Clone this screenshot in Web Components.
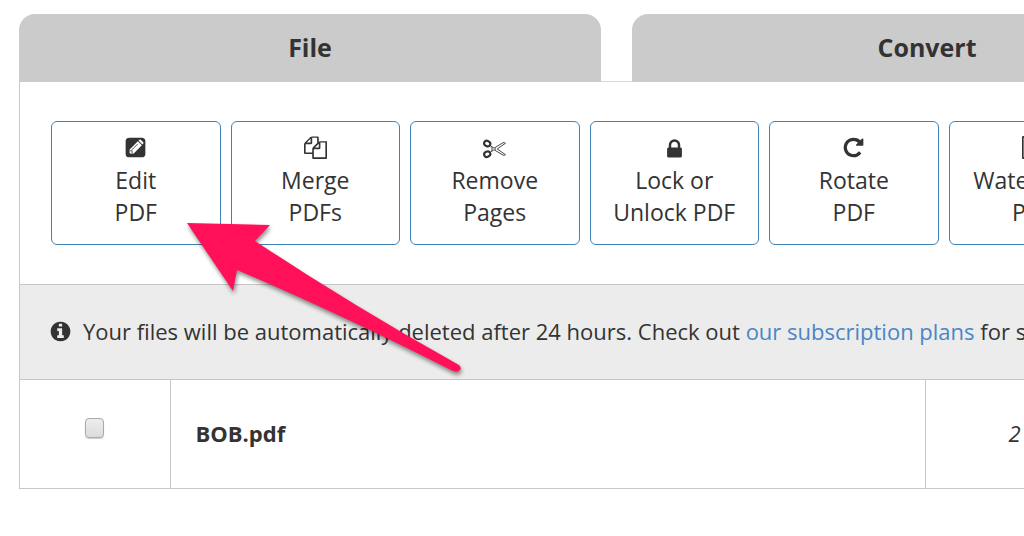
<!DOCTYPE html>
<html lang="en">
<head>
<meta charset="utf-8">
<title>PDF tools</title>
<style>
html, body { margin: 0; background: #fff; overflow: hidden; }
body { font-family: "Open Sans", "Noto Sans", sans-serif; font-size: 22px; line-height: 32px; color: #333; }
</style>
</head>
<body>
<pdf-app></pdf-app>
<script>
const define = (name, html, setup) => {
  const template = document.createElement('template');
  template.innerHTML = html;
  customElements.define(name, class extends HTMLElement {
    constructor() {
      super();
      this.attachShadow({ mode: 'open' }).append(template.content.cloneNode(true));
    }
    connectedCallback() { if (setup) setup(this); }
  });
};

const icons = {
  edit: '<rect x="128" y="128" width="1536" height="1536" rx="290"/><path fill="#fff" d="M440 1370V1050L1080 410L1390 720L760 1370ZM1130 360l70-70q50-40 100 0l200 200q50 50 0 100l-65 75z"/><path fill="none" stroke="#333" stroke-width="65" d="M610 1080l470-470M480 1150h150v170"/>',
  copy: '<path d="M1696 384q40 0 68 28t28 68v1216q0 40-28 68t-68 28H736q-40 0-68-28t-28-68v-288H96q-40 0-68-28t-28-68V672q0-40 20-88t48-76L476 100q28-28 76-48t88-20h416q40 0 68 28t28 68v328q68-40 128-40h416zm-544 213L853 896h299V597zM512 213L213 512h299V213zm196 647l316-316V128H640v416q0 40-28 68t-68 28H128v640h512v-256q0-40 20-88t48-76zm956 804V512h-384v416q0 40-28 68t-68 28H768v640h896z"/>',
  cut: '<g fill="none" stroke="#333"><g stroke-width="170"><ellipse cx="330" cy="590" rx="245" ry="205" transform="rotate(25 330 590)"/><ellipse cx="330" cy="1420" rx="245" ry="205" transform="rotate(-25 330 1420)"/></g><path stroke-width="70" stroke-linejoin="round" d="M540 740L860 950L1560 520Q1660 490 1750 565L1110 1010L1750 1455Q1660 1530 1560 1490L860 1070L540 1280M700 840v340"/><circle cx="960" cy="1010" r="35" stroke-width="50"/></g>',
  lock: '<path d="M640 768h512V576q0-106-75-181t-181-75-181 75-75 181v192zm832 96v576q0 40-28 68t-68 28H416q-40 0-68-28t-28-68V864q0-40 28-68t68-28h32V576q0-184 132-316t316-132 316 132 132 316v192h32q40 0 68 28t28 68z" transform="translate(0 130)"/>',
  rotate: '<path d="M1664 256v448q0 26-19 45t-45 19h-448q-42 0-59-40-17-39 14-69l138-138Q1097 384 896 384q-104 0-198.500 40.500T534 534 424.500 697.500 384 896t40.500 198.500T534 1258t163.500 109.500T896 1408q119 0 225-52t179-147q7-10 23-12 15 0 25 9l137 138q9 8 9.500 20.500t-7.500 22.500q-109 132-264 204.500T896 1664q-156 0-298-61t-245-164-164-245-61-298 61-298 164-245 245-164 298-61q147 0 284.500 55.500T1425 340l130-129q29-31 70-14 39 17 39 59z"/>',
  file: '<path d="M1596 380q28 28 48 76t20 88v1152q0 40-28 68t-68 28H96q-40 0-68-28t-28-68V96q0-40 28-68T96 0h1000q40 0 88 20t76 48zM1152 128H128v1536h1408V640h-416q-40 0-68-28t-28-68zM400 800h850v120H400zM400 1056h850v120H400zM400 1312h850v120H400z" fill-rule="evenodd"/>',
  info: '<path d="M1152 1376v-160q0-14-9-23t-23-9h-96V672q0-14-9-23t-23-9H672q-14 0-23 9t-9 23v160q0 14 9 23t23 9h96v320h-96q-14 0-23 9t-9 23v160q0 14 9 23t23 9h448q14 0 23-9t9-23zm-128-896V320q0-14-9-23t-23-9H800q-14 0-23 9t-9 23v160q0 14 9 23t23 9h192q14 0 23-9t9-23zm640 416q0 209-103 385.500T1281.500 1561 896 1664t-385.500-103T231 1281.500 128 896t103-385.500T510.500 231 896 128t385.500 103T1561 510.500 1664 896z"/>'
};

define('app-icon', `
<style>
:host { display: block; width: 23px; height: 23px; flex: none; }
svg { display: block; width: 100%; height: 100%; fill: #333; }
</style>
<svg viewBox="0 0 1792 1792" aria-hidden="true"></svg>`,
el => { el.shadowRoot.querySelector('svg').innerHTML = icons[el.getAttribute('name')]; });

define('tab-button', `
<style>
:host { display: block; }
button { display: block; width: 100%; height: 68px; margin: 0; padding: 0 0 2px; border: 0; border-radius: 16px 16px 0 0;
  background: #cbcbcb; color: #333; font: 700 25px/32px "Open Sans", "Noto Sans", sans-serif; }
</style>
<button type="button"><slot></slot></button>`);

define('tool-button', `
<style>
:host { display: block; min-width: 0; }
button { display: flex; flex-direction: column; align-items: center; gap: 5px; box-sizing: border-box; width: 100%; height: 124px;
  margin: 0; padding: 14px 0 0; border: 1px solid #4382b5; border-radius: 6px; background: #fff;
  color: #333; font: inherit; font-size: 23px; font-weight: 380; justify-content: flex-start; white-space: nowrap; }
</style>
<button type="button"><app-icon></app-icon><span><slot></slot></span></button>`,
el => {
  const icon = document.createElement('app-icon');
  icon.setAttribute('name', el.getAttribute('icon'));
  el.shadowRoot.querySelector('app-icon').replaceWith(icon);
});

define('info-bar', `
<style>
:host { display: flex; align-items: center; gap: 11px; padding: 30px 0 32px 29px; background: #ececec; font-weight: 370;
  border-top: 1px solid #c6c6c6; border-bottom: 1px solid #c6c6c6; white-space: nowrap; }
</style>
<app-icon name="info"></app-icon><span><slot></slot></span>`);

define('file-table', `
<style>
:host { display: block; }
table { width: 100%; table-layout: fixed; border-collapse: collapse; }
td { box-sizing: border-box; height: 108px; padding: 0 0 2px 25px; text-align: left; border-right: 1px solid #c6c6c6; }
td:last-child { border-right: 0; padding-left: 83px; font-style: italic; }
.select { width: 150px; padding: 0 0 12px; text-align: center; }
.size { width: 296px; }
input { appearance: none; display: block; width: 19px; height: 20px; margin: 0 auto; border: 1px solid #aaa; border-radius: 4px;
  background: linear-gradient(#ededed, #dcdcdc); box-shadow: 0 1px 1px #ccc; }
label { font-weight: 700; }
</style>
<table><tbody><tr>
  <td class="select"><input type="checkbox" id="pick" aria-labelledby="name"></td>
  <td><label for="pick" id="name"><slot name="name"></slot></label></td>
  <td class="size"><slot name="size"></slot></td>
</tr></tbody></table>`);

define('pointer-arrow', `
<style>
:host { position: absolute; left: 180px; top: 216px; width: 290px; height: 170px; pointer-events: none; }
svg { display: block; overflow: visible; filter: drop-shadow(1px 3px 2px rgba(0,0,0,.45)); }
</style>
<svg width="290" height="170" viewBox="0 0 290 170" aria-hidden="true">
<path fill="#ff1059" d="M7 7L90 9L75 25Q175 91 279 149Q282 152 280 154Q278 157 273 155Q160 98 57 54L53 75Z"/></svg>`);

define('pdf-app', `
<style>
:host { display: block; position: relative; overflow: hidden; padding: 14px 0 48px 19px; }
main { width: calc(100% + 198px); }
.tabs { display: grid; grid-template-columns: 582fr 590fr; gap: 31px; box-shadow: inset 0 -1px #dcdcdc; }
.panel { border: solid #c6c6c6; border-width: 0 1px 1px; }
.tools { display: grid; grid-template-columns: repeat(6, 1fr); gap: 10px; padding: 39px 103px 39px 31px; }
a { color: #4a86c5; text-decoration: none; }
</style>
<main>
  <nav class="tabs"><tab-button>File</tab-button><tab-button>Convert</tab-button></nav>
  <section class="panel">
    <div class="tools">
      <tool-button icon="edit">Edit<br>PDF</tool-button>
      <tool-button icon="copy">Merge<br>PDFs</tool-button>
      <tool-button icon="cut">Remove<br>Pages</tool-button>
      <tool-button icon="lock">Lock or<br>Unlock PDF</tool-button>
      <tool-button icon="rotate">Rotate<br>PDF</tool-button>
      <tool-button icon="file">Watermark<br>PDF</tool-button>
    </div>
    <info-bar>Your files will be automatically deleted after 24 hours. Check out <a href="#plans">our subscription plans</a> for storage</info-bar>
    <file-table><span slot="name">BOB.pdf</span><span slot="size">2</span></file-table>
  </section>
</main>
<pointer-arrow></pointer-arrow>`);
</script>
</body>
</html>
